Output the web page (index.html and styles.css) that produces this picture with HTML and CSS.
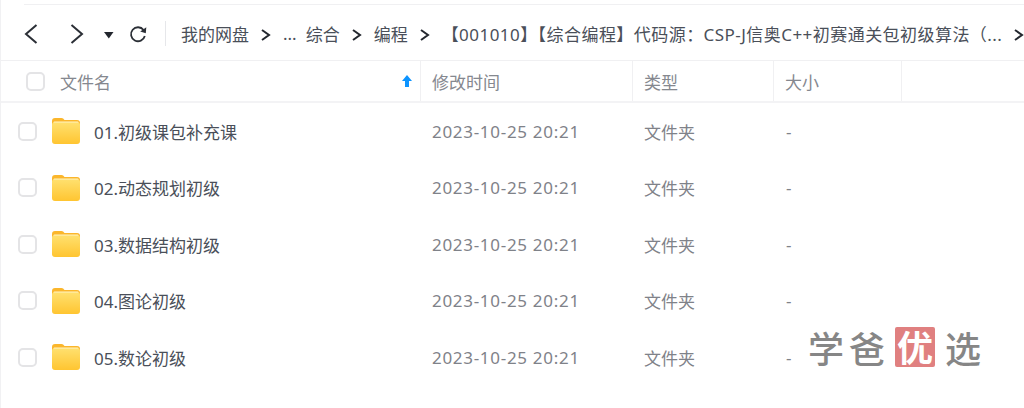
FILE: index.html
```html
<!DOCTYPE html>
<html lang="zh-CN">
<head>
  <meta charset="UTF-8">
  <title>我的网盘</title>
  <link rel="stylesheet" href="styles.css">
</head>
<body>
  <div class="disk-app">
    <div class="toolbar">
      <div class="nav-btns">
        <svg class="ico-back" width="14" height="22" viewBox="0 0 14 22"><path d="M12.500 2 2 11l10.500 9" fill="none" stroke="#2b2f36" stroke-width="2"/></svg>
        <svg class="ico-next" width="14" height="22" viewBox="0 0 14 22"><path d="M1.500 2 12 11 1.500 20" fill="none" stroke="#2b2f36" stroke-width="2"/></svg>
        <svg class="ico-drop" width="10" height="8" viewBox="0 0 10 8"><path d="M0 1h9.500L4.800 7.500z" fill="#23272e"/></svg>
        <svg class="ico-refresh" width="18" height="18" viewBox="0 0 18 18"><path d="M14.600 5A7 7 0 1 0 15.800 11" fill="none" stroke="#2b2f36" stroke-width="1.800"/><path d="M17.300 2.200 16.800 8.200 11.200 6.500z" fill="#2b2f36"/></svg>
      </div>
      <div class="crumbs">
        <span>我的网盘</span><svg class="sep" width="10" height="12" viewBox="0 0 10 12"><path d="M1 1l7 5-7 5" fill="none" stroke="#23272e" stroke-width="2"/></svg>
        <span class="dots">...</span>
        <span>综合</span><svg class="sep" width="10" height="12" viewBox="0 0 10 12"><path d="M1 1l7 5-7 5" fill="none" stroke="#23272e" stroke-width="2"/></svg>
        <span>编程</span><svg class="sep" width="10" height="12" viewBox="0 0 10 12"><path d="M1 1l7 5-7 5" fill="none" stroke="#23272e" stroke-width="2"/></svg>
        <span class="long">【001010】【综合编程】代码源：CSP-J信奥C++初赛通关包初级算法（...</span><svg class="sep" width="10" height="12" viewBox="0 0 10 12"><path d="M1 1l7 5-7 5" fill="none" stroke="#23272e" stroke-width="2"/></svg>
      </div>
    </div>

    <div class="file-row head-row">
      <div class="cell name-cell">
        <span class="check head-check"></span>
        <span class="head-name">文件名</span>
        <svg class="sort-up" width="10" height="12" viewBox="0 0 10 12"><path d="M5 0 10 6H7v6H3V6H0z" fill="#0d94ff"/></svg>
      </div>
      <div class="cell">修改时间</div>
      <div class="cell">类型</div>
      <div class="cell">大小</div>
      <div class="cell"></div>
    </div>

    <div class="file-list">
      <div class="file-row">
        <div class="cell name-cell"><span class="check"></span><svg class="folder" width="28" height="26" viewBox="0 0 28 26"><use href="#folder-ico"/></svg><span class="file-name">01.初级课包补充课</span></div>
        <div class="cell date">2023-10-25 20:21</div><div class="cell">文件夹</div><div class="cell size">-</div>
      </div>
      <div class="file-row">
        <div class="cell name-cell"><span class="check"></span><svg class="folder" width="28" height="26" viewBox="0 0 28 26"><use href="#folder-ico"/></svg><span class="file-name">02.动态规划初级</span></div>
        <div class="cell date">2023-10-25 20:21</div><div class="cell">文件夹</div><div class="cell size">-</div>
      </div>
      <div class="file-row">
        <div class="cell name-cell"><span class="check"></span><svg class="folder" width="28" height="26" viewBox="0 0 28 26"><use href="#folder-ico"/></svg><span class="file-name">03.数据结构初级</span></div>
        <div class="cell date">2023-10-25 20:21</div><div class="cell">文件夹</div><div class="cell size">-</div>
      </div>
      <div class="file-row">
        <div class="cell name-cell"><span class="check"></span><svg class="folder" width="28" height="26" viewBox="0 0 28 26"><use href="#folder-ico"/></svg><span class="file-name">04.图论初级</span></div>
        <div class="cell date">2023-10-25 20:21</div><div class="cell">文件夹</div><div class="cell size">-</div>
      </div>
      <div class="file-row">
        <div class="cell name-cell"><span class="check"></span><svg class="folder" width="28" height="26" viewBox="0 0 28 26"><use href="#folder-ico"/></svg><span class="file-name">05.数论初级</span></div>
        <div class="cell date">2023-10-25 20:21</div><div class="cell">文件夹</div><div class="cell size">-</div>
      </div>
    </div>

    <div class="watermark"><span class="wm-word">学</span><span class="wm-word">爸</span><span class="seal">优</span><span class="wm-word">选</span></div>
  </div>

  <svg width="0" height="0" class="defs">
    <defs>
      <linearGradient id="folder-front" x1="0" y1="0" x2="0" y2="1">
        <stop offset="0" stop-color="#ffe06e"/>
        <stop offset="1" stop-color="#ffc531"/>
      </linearGradient>
      <g id="folder-ico">
        <path d="M0 3a3 3 0 0 1 3-3h6.500c1.500 0 2 .8 3 2h12.500a3 3 0 0 1 3 3v6H0z" fill="#fbb62b"/>
        <rect x="1.500" y="3.500" width="25" height="6" rx="1" fill="#fff3c4"/>
        <path d="M0 6.500a2 2 0 0 1 2-2h24a2 2 0 0 1 2 2V23a3 3 0 0 1-3 3H3a3 3 0 0 1-3-3z" fill="url(#folder-front)"/>
      </g>
    </defs>
  </svg>
</body>
</html>
```

FILE: styles.css
```css
* {
  box-sizing: border-box;
}
body {
  margin: 0;
  background: #fff;
  font-family: "Noto Sans", "Noto Sans CJK SC", sans-serif;
  color: #7f8289;
  font-size: 17px;
  overflow: hidden;
}
.disk-app {
  position: relative;
  width: 1024px;
  height: 408px;
  padding-top: 4px;
  border-left: 1px solid #f1f1f3;
  overflow: hidden;
}
.toolbar {
  display: flex;
  align-items: center;
  height: 57px;
  margin-left: 23px;
  padding-top: 1px;
  border-top: 1px solid #f0f0f2;
}
.disk-app::before {
  content: "";
  position: absolute;
  left: 0;
  right: 0;
  top: 60px;
  border-top: 1px solid #f0f0f2;
}
.nav-btns {
  display: flex;
  flex: none;
  align-items: center;
  width: 142px;
  height: 25px;
  border-right: 1px solid #e6e7ea;
}
.ico-next {
  margin-left: 32px;
}
.ico-drop {
  margin-left: 20px;
  margin-top: 3px;
}
.ico-refresh {
  margin-left: 15px;
}
.crumbs {
  display: flex;
  flex: none;
  align-items: center;
  margin-left: 15px;
  color: #4a4f59;
  white-space: nowrap;
}
.sep {
  margin: 2px 12px 0 12px;
  flex: none;
}
.dots {
  margin-right: 9px;
}
.long {
  letter-spacing: .45px;
}
.file-row {
  display: grid;
  grid-template-columns: 420px 212px 141px 128px 1fr;
  align-items: center;
  height: 56.5px;
}
.head-row {
  height: 42px;
  border-bottom: 2px solid #f3f3f5;
  align-items: stretch;
}
.head-row .cell {
  display: flex;
  align-items: center;
  border-right: 1px solid #f0f0f2;
  color: #85888f;
}
.head-row .cell:last-child {
  border-right: none;
}
.cell {
  padding-left: 11px;
  white-space: nowrap;
}
.date {
  letter-spacing: .7px;
}
.name-cell {
  display: flex;
  align-items: center;
  padding-left: 0;
}
.check {
  width: 19px;
  height: 19px;
  margin-left: 17px;
  border: 2px solid #e4e4e6;
  border-radius: 5px;
  background: #fff;
}
.head-check {
  margin-left: 25px;
}
.head-name {
  margin-left: 15px;
}
.sort-up {
  margin-left: auto;
  margin-right: 8px;
}
.folder {
  margin-left: 15px;
}
.file-name {
  margin-left: 14px;
  color: #4a4f59;
}
.size {
  padding-left: 12px;
}
.defs {
  position: absolute;
}
.watermark {
  position: absolute;
  left: 807px;
  top: 323px;
  display: flex;
  align-items: center;
  gap: 5px;
  font-family: "Noto Sans CJK SC", sans-serif;
  font-size: 36px;
  font-weight: 500;
  line-height: 48px;
  color: #868686;
}
.seal {
  width: 40px;
  height: 40px;
  margin: 0 5px;
  border-radius: 2px;
  background: #e08080;
  color: #fff;
  font-size: 36px;
  font-weight: 700;
  line-height: 38px;
  text-align: center;
}
```
